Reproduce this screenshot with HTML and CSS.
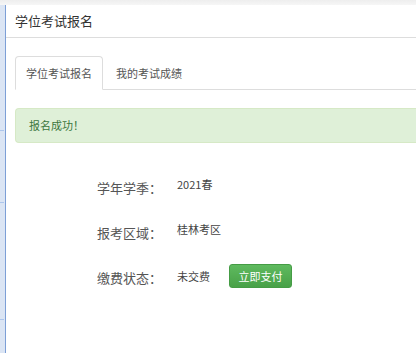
FILE: index.html
```html
<!DOCTYPE html>
<html>
	<head>
		<meta charset="utf-8">
		<title>学位考试报名</title>
		<link rel="stylesheet" href="styles.css">
	</head>
	<body>
		<div class="topbar"></div>
		<div class="frame">
			<div class="side">
				<div class="side-item h1"></div>
				<div class="side-item h2"></div>
				<div class="side-item h3"></div>
			</div>
			<div class="main">
				<div class="head">学位考试报名</div>
				<div class="content">
					<ul class="tabs">
						<li class="active">学位考试报名</li>
						<li>我的考试成绩</li>
					</ul>
					<div class="alert">报名成功！</div>
					<div class="form">
						<div class="row">
							<span class="label">学年学季：</span>
							<span class="value">2021春</span>
						</div>
						<div class="row">
							<span class="label">报考区域：</span>
							<span class="value">桂林考区</span>
						</div>
						<div class="row">
							<span class="label">缴费状态：</span>
							<span class="value tall">未交费</span>
							<a class="btn-pay" href="">立即支付</a>
						</div>
					</div>
				</div>
			</div>
		</div>
	</body>
</html>
```

FILE: styles.css
```css
*{margin: 0;padding: 0;box-sizing: border-box;}
ul,li{list-style: none;}
body{
	font-family: "Noto Sans CJK SC", "Liberation Sans", sans-serif;
	color: #555;
	background: #fff;
	overflow: hidden;
	height: 353px;
}
.topbar{
	height: 5px;
	background: linear-gradient(#eee, #f6f6f6);
}
.frame{
	display: flex;
	height: 348px;
}
.side{
	width: 6px;
	background: #dbe5f4;
	border-right: 1px solid #7d9fd6;
	flex: none;
}
.side-item{
	width: 4px;
	border-bottom: 1px solid #adc6ec;
}
.side .h1{height: 126px;}
.side .h2{height: 72px;}
.side .h3{height: 117px;}
.main{
	flex: 1;
	min-width: 0;
}
.head{
	height: 33px;
	line-height: 32px;
	padding-left: 9px;
	font-size: 13px;
	color: #333;
	border-bottom: 1px solid #ddd;
}
.content{
	padding: 18px 0 0 9px;
}
.tabs{
	display: flex;
	height: 34px;
	border-bottom: 1px solid #ddd;
}
.tabs li{
	height: 34px;
	line-height: 32px;
	padding: 0 10px;
	margin-right: 2px;
	font-size: 11px;
	color: #555;
	border: 1px solid transparent;
	border-radius: 4px 4px 0 0;
}
.tabs li.active{
	background: #fff;
	border-color: #ddd #ddd transparent;
}
.alert{
	margin-top: 18px;
	height: 35px;
	padding: 8px 13px;
	line-height: 17px;
	font-size: 11px;
	color: #3c763d;
	background: #dff0d8;
	border: 1px solid #d6e9c6;
	border-right: 0;
	border-radius: 4px 0 0 4px;
}
.form{
	margin-top: 31px;
}
.row{
	display: flex;
	align-items: flex-start;
	height: 24px;
	margin-bottom: 21px;
}
.label{
	width: 147px;
	margin-top: 4px;
	text-align: right;
	font-size: 13px;
	line-height: 20px;
	color: #555;
}
.value{
	margin-left: 15px;
	font-size: 11px;
	line-height: 20px;
	color: #444;
}
.value.tall{
	line-height: 24px;
}
.btn-pay{
	display: block;
	width: 63px;
	height: 24px;
	margin-left: 19px;
	line-height: 22px;
	text-align: center;
	font-size: 11px;
	color: #fff;
	text-decoration: none;
	background: linear-gradient(#5fba5f, #48a148);
	border: 1px solid #459c45;
	border-radius: 3px;
}
```
